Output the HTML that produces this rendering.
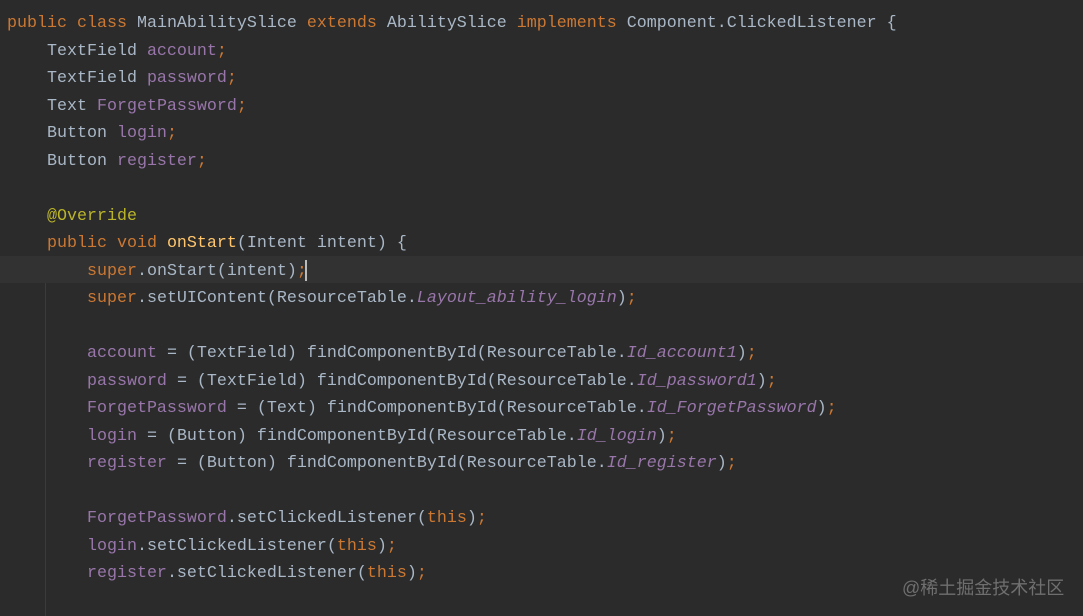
<!DOCTYPE html>
<html><head><meta charset="utf-8"><style>
body{margin:0;width:1083px;height:616px;background:#2b2b2b;overflow:hidden;position:relative;font-family:"Liberation Mono",monospace;font-size:16.67px;color:#a9b7c6}
.l{position:absolute;left:7px;height:27.5px;line-height:27.5px;white-space:pre;margin-top:2px}
.k{color:#cc7832}.f{color:#9876aa}.fi{color:#9876aa;font-style:italic}.a{color:#bbb529}.m{color:#ffc66d}
.hl{position:absolute;left:0;top:256px;width:1083px;height:27px;background:#323232}
.g{position:absolute;left:45px;top:283px;width:1px;height:333px;background:#3b3b3b}
.cur{position:absolute;left:305px;top:260px;width:2px;height:21px;background:#bbbbbb}
.wm{position:absolute;left:902px;top:574px;font-family:"Liberation Sans","Noto Sans CJK SC",sans-serif;font-size:18px;color:#6f6f6f}
</style></head><body>
<div class="hl"></div><div class="g"></div>
<div class="l" style="top:8px"><span class="k">public class </span>MainAbilitySlice <span class="k">extends </span>AbilitySlice <span class="k">implements </span>Component.ClickedListener {</div>
<div class="l" style="top:35.5px">    TextField <span class="f">account</span><span class="k">;</span></div>
<div class="l" style="top:63px">    TextField <span class="f">password</span><span class="k">;</span></div>
<div class="l" style="top:90.5px">    Text <span class="f">ForgetPassword</span><span class="k">;</span></div>
<div class="l" style="top:118px">    Button <span class="f">login</span><span class="k">;</span></div>
<div class="l" style="top:145.5px">    Button <span class="f">register</span><span class="k">;</span></div>
<div class="l" style="top:200.5px">    <span class="a">@Override</span></div>
<div class="l" style="top:228px">    <span class="k">public void </span><span class="m">onStart</span>(Intent intent) {</div>
<div class="l" style="top:255.5px">        <span class="k">super</span>.onStart(intent)<span class="k">;</span></div>
<div class="l" style="top:283px">        <span class="k">super</span>.setUIContent(ResourceTable.<span class="fi">Layout_ability_login</span>)<span class="k">;</span></div>
<div class="l" style="top:338px">        <span class="f">account </span>= (TextField) findComponentById(ResourceTable.<span class="fi">Id_account1</span>)<span class="k">;</span></div>
<div class="l" style="top:365.5px">        <span class="f">password </span>= (TextField) findComponentById(ResourceTable.<span class="fi">Id_password1</span>)<span class="k">;</span></div>
<div class="l" style="top:393px">        <span class="f">ForgetPassword </span>= (Text) findComponentById(ResourceTable.<span class="fi">Id_ForgetPassword</span>)<span class="k">;</span></div>
<div class="l" style="top:420.5px">        <span class="f">login </span>= (Button) findComponentById(ResourceTable.<span class="fi">Id_login</span>)<span class="k">;</span></div>
<div class="l" style="top:448px">        <span class="f">register </span>= (Button) findComponentById(ResourceTable.<span class="fi">Id_register</span>)<span class="k">;</span></div>
<div class="l" style="top:503px">        <span class="f">ForgetPassword</span>.setClickedListener(<span class="k">this</span>)<span class="k">;</span></div>
<div class="l" style="top:530.5px">        <span class="f">login</span>.setClickedListener(<span class="k">this</span>)<span class="k">;</span></div>
<div class="l" style="top:558px">        <span class="f">register</span>.setClickedListener(<span class="k">this</span>)<span class="k">;</span></div>
<div class="cur"></div>
<div class="wm">@稀土掘金技术社区</div>
</body></html>
